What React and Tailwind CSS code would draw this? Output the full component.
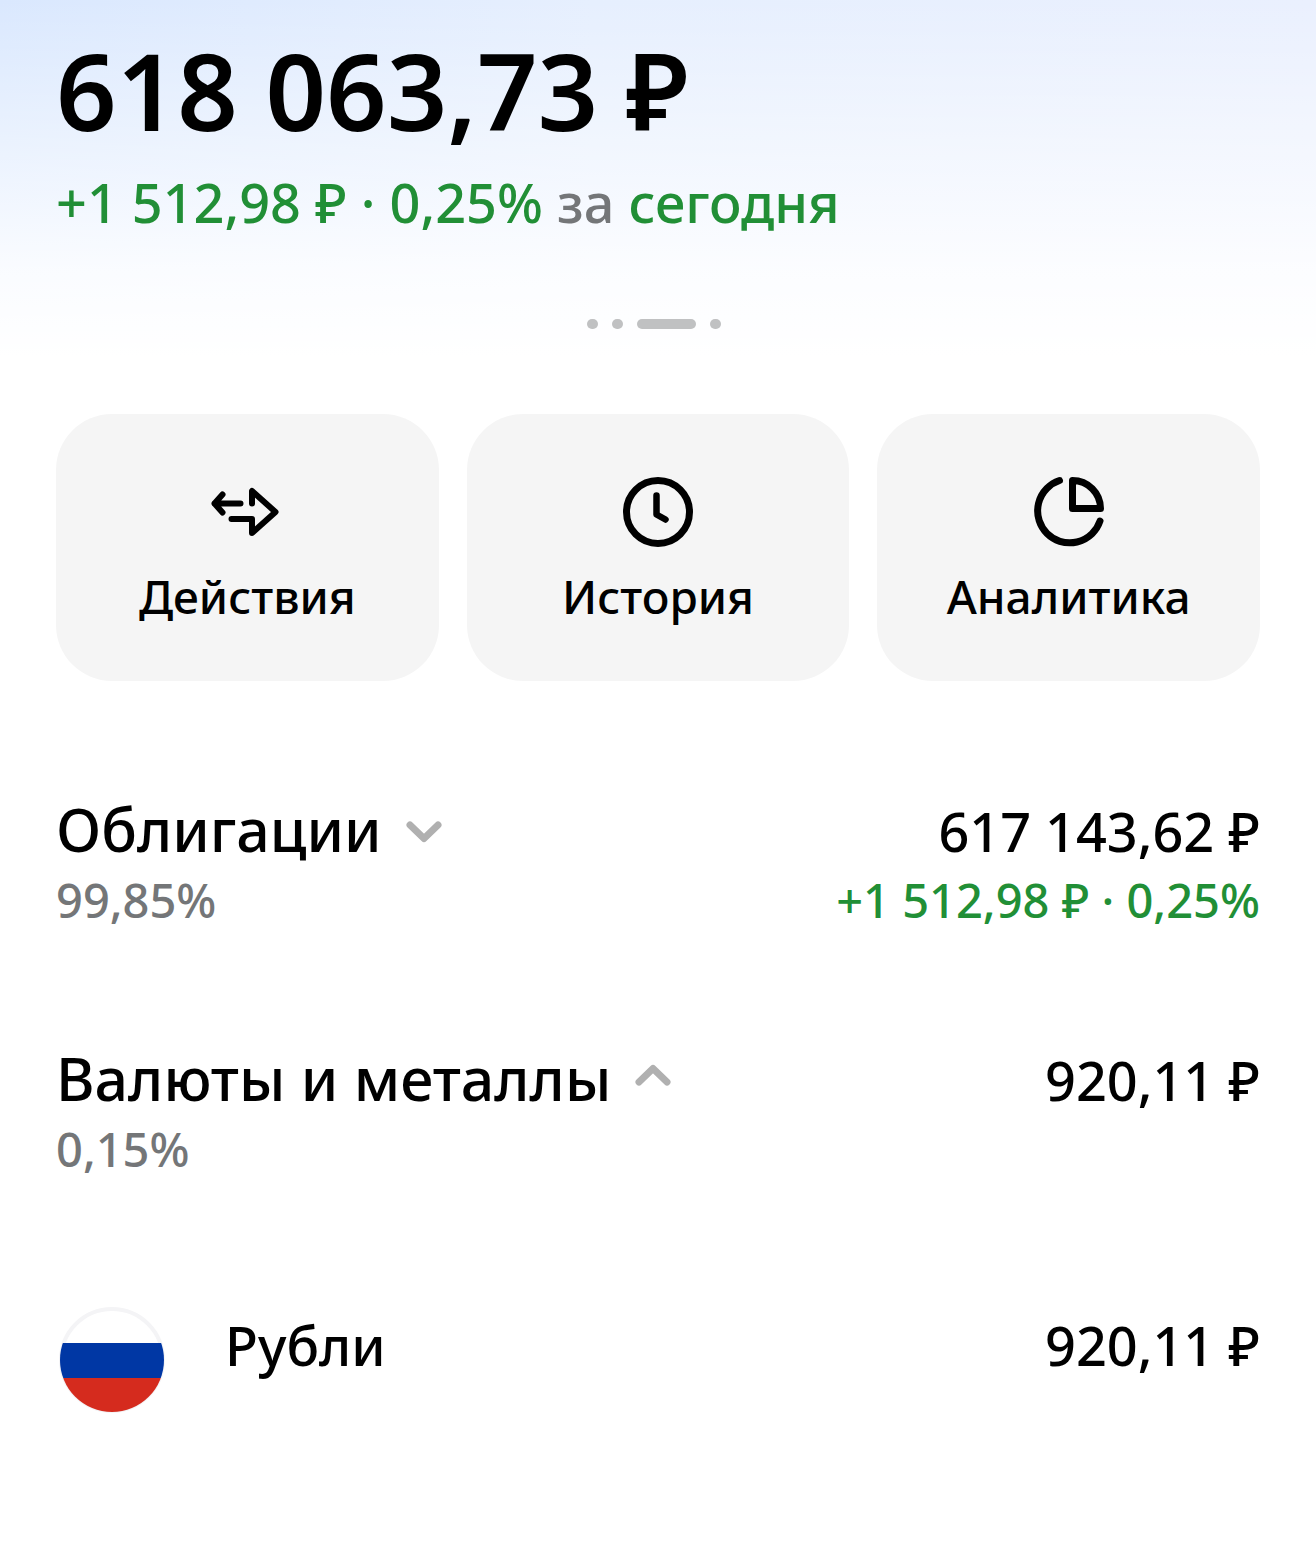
import React, { useState } from 'react';

const ActionsIcon = () => (
  <svg className="size-24" viewBox="0 0 96 96" fill="none" stroke="currentColor" strokeWidth="6" strokeLinecap="round" strokeLinejoin="round" aria-hidden="true">
    <path d="M41.500 39.500H15.500M23.500 30.500 15.500 39.500 23.500 48.500" />
    <path d="M32.500 55H53V69L76.500 48 53 27V39.500" />
  </svg>
);

const HistoryIcon = () => (
  <svg className="size-24" viewBox="0 0 96 96" fill="none" stroke="currentColor" strokeLinecap="round" strokeLinejoin="round" aria-hidden="true">
    <circle cx="48" cy="48" r="31.500" strokeWidth="7" />
    <path d="M46.500 31.500V50.500L55.500 55.500" strokeWidth="6.500" />
  </svg>
);

const AnalyticsIcon = () => (
  <svg className="size-24" viewBox="0 0 96 96" fill="none" stroke="currentColor" strokeWidth="7" strokeLinecap="round" strokeLinejoin="round" aria-hidden="true">
    <path d="M38.500 16.500A32 32 0 1 0 79 57" />
    <path d="M51.500 16.500V44.500H79.500A28 28 0 0 0 51.500 16.500Z" />
  </svg>
);

const Chevron = ({ open }) => (
  <svg className="h-8 w-9 text-[#b0b0b0]" viewBox="0 0 36 32" fill="none" stroke="currentColor" strokeWidth="7" strokeLinecap="round" strokeLinejoin="round" aria-hidden="true">
    <path d={open ? 'M4 20 18 6.500 32 20' : 'M4 12 18 25.500 32 12'} />
  </svg>
);

const RussiaFlag = () => (
  <svg className="size-[106px]" viewBox="0 0 106 106" role="img" aria-label="Россия">
    <clipPath id="flag-circle">
      <circle cx="53" cy="53" r="52" />
    </clipPath>
    <circle cx="53" cy="53" r="51" fill="#fff" stroke="#f4f4f6" strokeWidth="4" />
    <g clipPath="url(#flag-circle)">
      <path d="M0 36H106V71H0Z" fill="#0037a4" />
      <path d="M0 71H106V106H0Z" fill="#d52b1e" />
    </g>
  </svg>
);

const actions = [
  { label: 'Действия', Icon: ActionsIcon },
  { label: 'История', Icon: HistoryIcon },
  { label: 'Аналитика', Icon: AnalyticsIcon },
];

const pages = ['accounts', 'stocks', 'portfolio', 'savings'];

const Section = ({ title, share, total, profit, open, onToggle, children }) => (
  <section>
    <button type="button" onClick={onToggle} aria-expanded={open} className="flex w-full items-start justify-between">
      <span className="flex flex-col items-start">
        <span className="flex items-center gap-6 text-[59px] leading-[72px]">
          {title}
          <Chevron open={open} />
        </span>
        <span className="text-[47px] leading-[70px] text-[#747678]">{share}</span>
      </span>
      <span className="flex flex-col items-end">
        <span className="text-[54px] leading-[76px]">{total}</span>
        {profit && <span className="text-[47px] leading-[62px] text-[#218f36]">{profit}</span>}
      </span>
    </button>
    {open && children}
  </section>
);

const App = () => {
  const [openSections, setOpenSections] = useState({ bonds: false, currency: true });
  const [activePage, setActivePage] = useState('portfolio');

  const toggle = (key) => {
    setOpenSections({ ...openSections, [key]: !openSections[key] });
  };

  return (
    <div className="min-h-screen bg-white font-['Noto_Sans','Open_Sans',sans-serif] font-medium text-black">
      <header className="bg-[linear-gradient(to_bottom,#ffffff00,#ffffff80_45%,#ffffffd9_75%,white),linear-gradient(to_right,#dae8fe,#e6effe_45%,#eaf0fe)] px-14 pt-[30px] pb-7">
        <h1 className="text-[106px] leading-[120px] font-semibold">618 063,73 ₽</h1>
        <p className="mt-5 text-[54px] leading-16 text-[#218f36]">
          +1 512,98 ₽ · 0,25% <span className="text-[#747678]">за</span>{' '}
          <button type="button">сегодня</button>
        </p>
        <nav className="mt-[85px] flex justify-center gap-[14px] pr-2" aria-label="Портфели">
          {pages.map((page) => (
            <button
              key={page}
              type="button"
              aria-label={page}
              onClick={() => setActivePage(page)}
              className={`h-[10px] rounded-full bg-[#c0c1c2] ${page === activePage ? 'w-[59px]' : 'w-[11px]'}`}
            />
          ))}
        </nav>
      </header>

      <main className="px-14 pt-[57px] pb-30">
        <div className="grid grid-cols-3 gap-7">
          {actions.map(({ label, Icon }) => (
            <button
              key={label}
              type="button"
              className="flex flex-col items-center gap-[2px] rounded-[56px] bg-[#f5f5f5] pt-[50px] pb-[51px] text-[46px] leading-[68px]"
            >
              <Icon />
              {label}
            </button>
          ))}
        </div>

        <div className="mt-28 flex flex-col gap-[107px]">
          <Section
            title="Облигации"
            share="99,85%"
            total="617 143,62 ₽"
            profit="+1 512,98 ₽ · 0,25%"
            open={openSections.bonds}
            onToggle={() => toggle('bonds')}
          />
          <Section
            title="Валюты и металлы"
            share="0,15%"
            total="920,11 ₽"
            open={openSections.currency}
            onToggle={() => toggle('currency')}
          >
            <ul className="mt-[123px]">
              <li className="flex items-start gap-[60px] pl-[3px] text-[54px] leading-[76px]">
                <RussiaFlag />
                <span className="flex-1">Рубли</span>
                <span>920,11 ₽</span>
              </li>
            </ul>
          </Section>
        </div>
      </main>
    </div>
  );
};

export default App;
